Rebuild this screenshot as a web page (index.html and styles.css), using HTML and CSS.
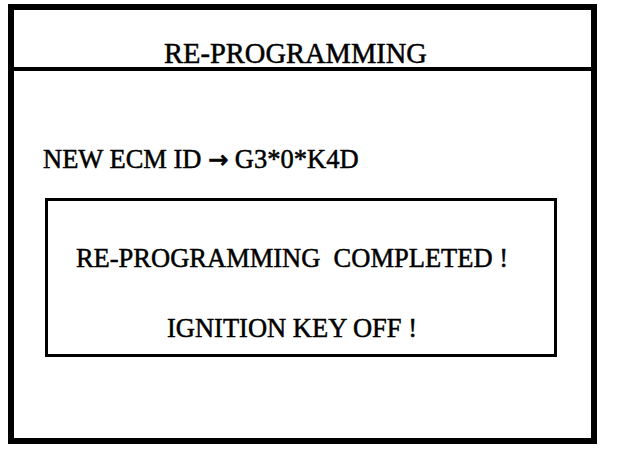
FILE: index.html
```html
<!DOCTYPE html>
<html lang="en">
<head>
  <meta charset="UTF-8">
  <title>RE-PROGRAMMING</title>
  <link rel="stylesheet" href="styles.css">
</head>
<body>

  <!-- 화면 외곽 -->
  <div class="screen">
    <div class="screen-title">RE-PROGRAMMING</div>

    <div class="screen-body">
      <div class="ecm-id">NEW ECM ID <span class="arrow">&rarr;</span> G3*0*K4D</div>

      <!-- 완료 메시지 박스 -->
      <div class="message-box">
        <div class="message">RE-PROGRAMMING  COMPLETED !</div>
        <div class="message second">IGNITION KEY OFF !</div>
      </div>
    </div>
  </div>

</body>
</html>
```

FILE: styles.css
```css
body {
  font-family: "Liberation Serif", "Times New Roman", serif;
  background-color: #fff;
  color: #000;
  margin: 0;
  padding: 4px 0 0 8px;
}
/* 외곽 박스 */
.screen {
  box-sizing: border-box;
  width: 589px;
  height: 440px;
  border: 6px solid #000;
}
.screen-title {
  height: 27px;
  padding: 30px 14px 0 0;
  border-bottom: 4px solid #000;
  text-align: center;
  font-size: 28.5px;
  line-height: 28px;
  -webkit-text-stroke: 0.5px #000;
}
.screen-body {
  padding: 75px 0 0 29px;
}
.ecm-id {
  font-size: 26.5px;
  line-height: 27px;
  white-space: pre;
  -webkit-text-stroke: 0.5px #000;
}
.arrow {
  font-family: "DejaVu Sans", sans-serif;
  font-size: 24px;
  -webkit-text-stroke: 0.8px #000;
}
/* 메시지 박스 */
.message-box {
  box-sizing: border-box;
  width: 512px;
  height: 159px;
  margin: 24px 0 0 2px;
  padding: 44px 18px 0 0;
  border: 3px solid #000;
  text-align: center;
}
.message {
  font-size: 26.5px;
  line-height: 27px;
  white-space: pre;
  -webkit-text-stroke: 0.5px #000;
}
.message.second {
  margin-top: 43px;
}
```
